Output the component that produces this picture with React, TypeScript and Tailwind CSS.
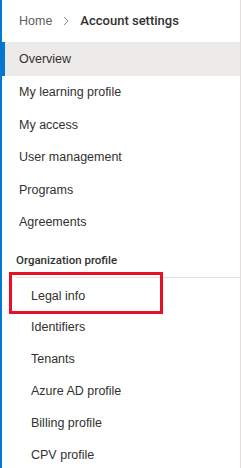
import React from 'react';

const topItems = ['Overview', 'My learning profile', 'My access', 'User management', 'Programs', 'Agreements'];
const orgItems = ['Identifiers', 'Tenants', 'Azure AD profile', 'Billing profile', 'CPV profile'];

export default function App() {
  return (
    <div
      className="w-[241px] h-[468px] overflow-hidden bg-white border-l-2 border-[#0078d4] border-r border-r-[#e1dfdd] text-[#323130]"
      style={{ fontFamily: '"Liberation Sans", Arial, sans-serif' }}
    >
      {/* Breadcrumb */}
      <div className="h-[42px] flex items-center pl-[17px] text-[12.5px]">
        <span className="text-[#605e5c]">Home</span>
        <svg width="6" height="10" viewBox="0 0 6 10" className="ml-[11px] mr-[11px]">
          <path d="M1 1l4 4-4 4" fill="none" stroke="#8a8886" strokeWidth="1" />
        </svg>
        <span className="font-medium text-[13px] font-[Roboto,sans-serif]">Account settings</span>
      </div>

      {/* Top nav */}
      <nav className="flex flex-col">
        {topItems.map((item, i) => (
          <div
            key={item}
            className={
              i === 0
                ? 'h-[34px] flex items-center pl-[14px] text-[12.5px] bg-[#edebe9] border-l-[3px] border-[#0078d4]'
                : 'h-[32.6px] flex items-center pl-[17px] text-[12.5px]'
            }
          >
            {item}
          </div>
        ))}
      </nav>

      {/* Organization profile */}
      <div className="mt-[5px] h-[33px] flex items-center pl-[14px] text-[11.5px] font-medium font-[Roboto,sans-serif]">
        Organization profile
      </div>
      <div className="relative ml-[14px] border-t border-[#e1dfdd]">
        <div className="absolute left-[-7px] top-[-6px] w-[154px] h-[42px] border-[3px] border-[#e81123]" />
        <div className="h-[33px] pt-[3px] flex items-center pl-[15px] text-[12.5px]">Legal info</div>
        {orgItems.map((item) => (
          <div key={item} className="h-8 flex items-center pl-[15px] text-[12.5px]">
            {item}
          </div>
        ))}
      </div>
    </div>
  );
}
